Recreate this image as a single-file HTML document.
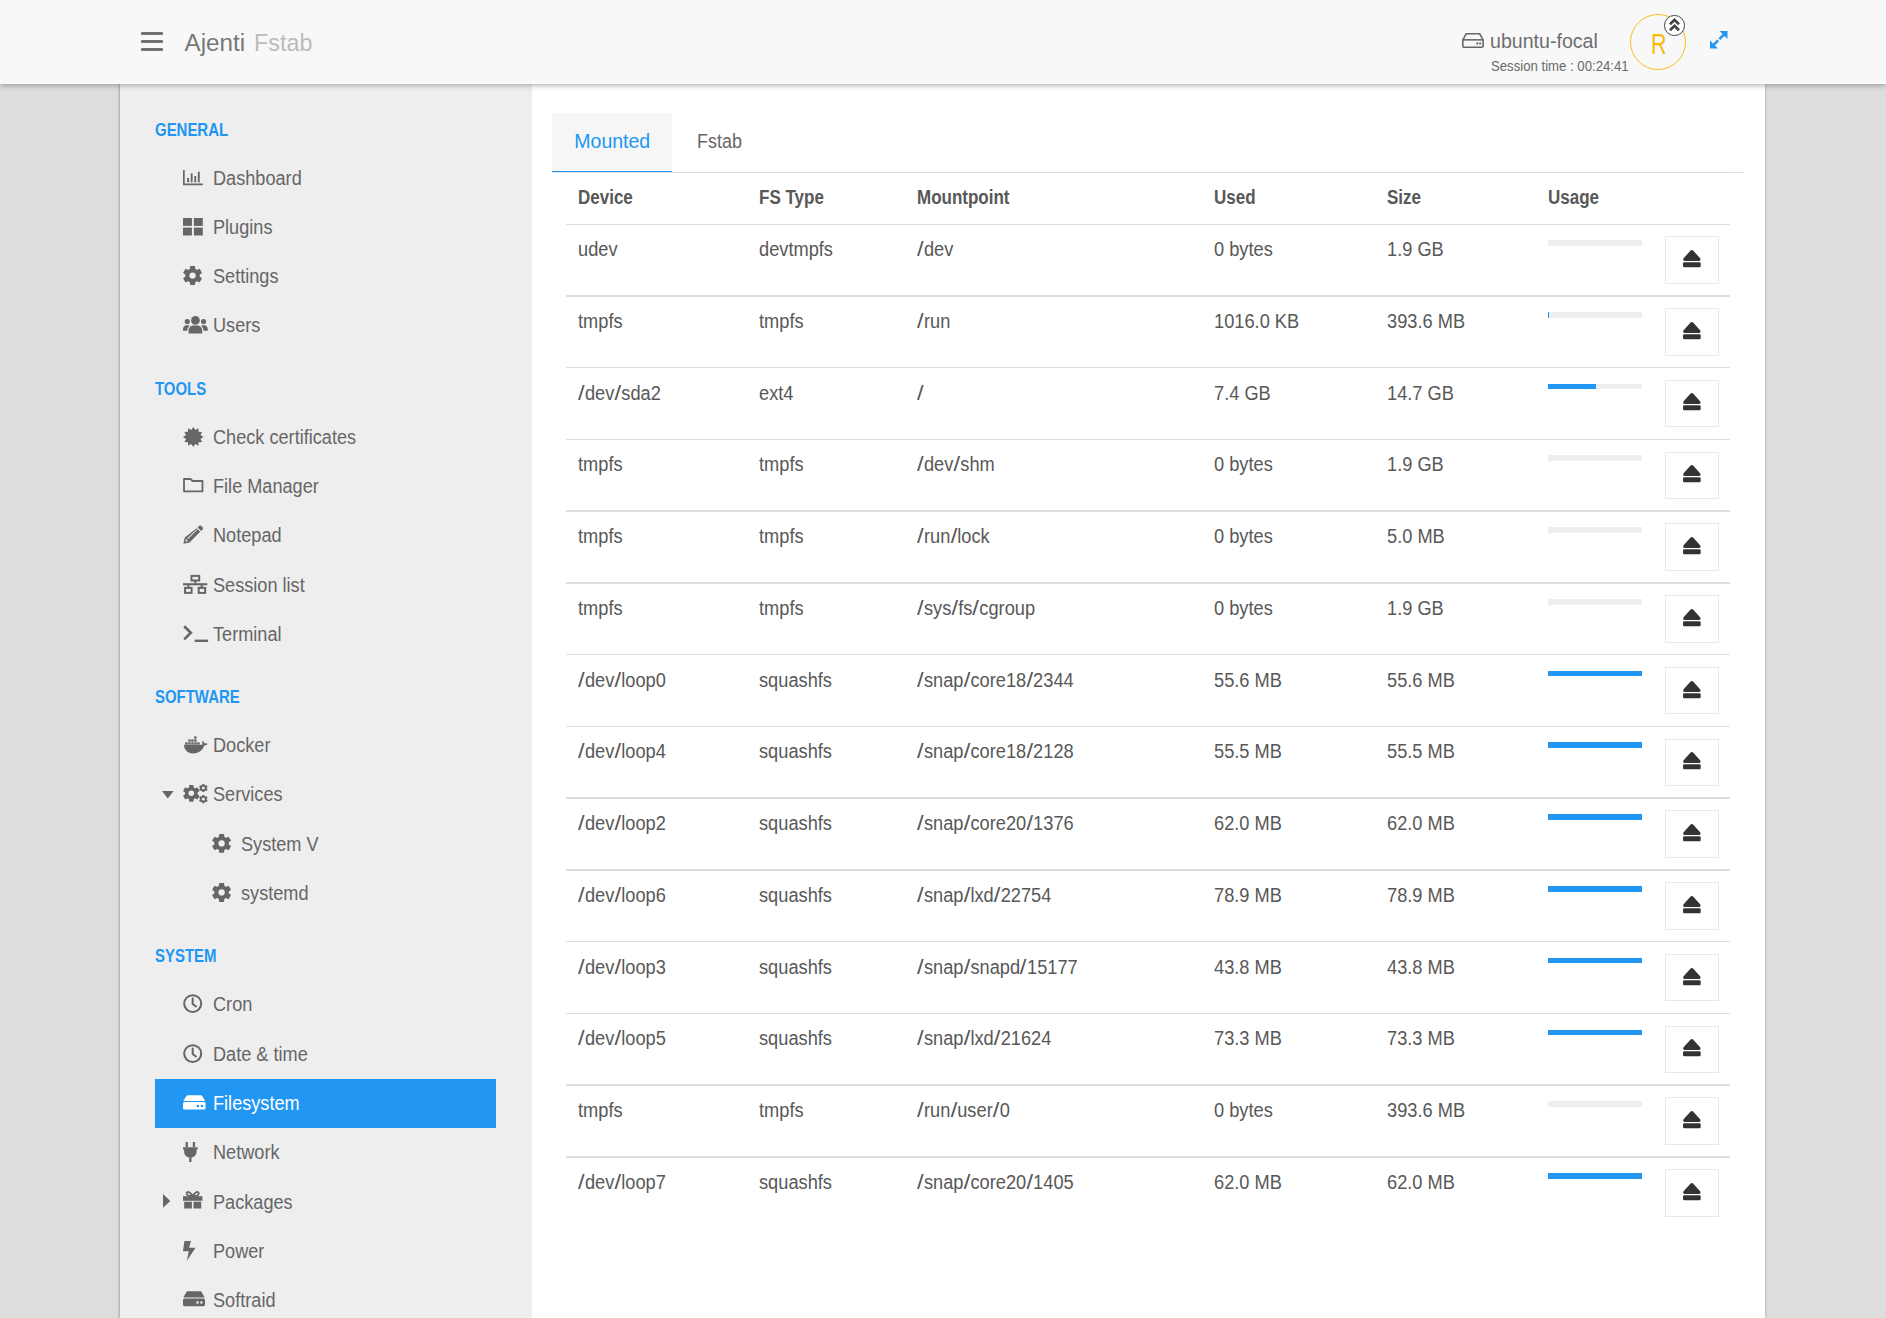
<!DOCTYPE html>
<html><head><meta charset="utf-8"><title>Ajenti Fstab</title>
<style>
html,body{margin:0;padding:0;width:1886px;height:1318px;overflow:hidden;background:#ddd}
body{position:relative;font-family:"Liberation Sans",sans-serif}
.t{position:absolute;white-space:nowrap}
.b{position:absolute}
.i{position:absolute;overflow:visible}
.sl{font-style:normal;display:inline-block;transform:scaleX(1.3);transform-origin:0 50%;margin-right:2px}
#hdr{position:absolute;left:0;top:0;width:1886px;height:84px;z-index:6}
</style></head><body>
<div class="b" style="left:0px;top:0px;width:1886px;height:1318px;background:#ddd"></div><div class="b" style="left:120px;top:84px;width:412px;height:1234px;background:#eee;box-shadow:-1px 0 2px rgba(0,0,0,.25)"></div><div class="b" style="left:532px;top:84px;width:1233px;height:1234px;background:#fff;box-shadow:1px 0 2px rgba(0,0,0,.15)"></div><div class="b" style="left:0px;top:0px;width:1886px;height:84px;background:#f8f8f8;border-bottom:1px solid rgba(255,255,255,.7);box-sizing:border-box;box-shadow:0 1px 6px rgba(0,0,0,.35);z-index:5"></div>
<div id="hdr"><div class="b" style="left:141px;top:32px;width:22px;height:3px;background:#717171;border-radius:1px"></div><div class="b" style="left:141px;top:40px;width:22px;height:3px;background:#717171;border-radius:1px"></div><div class="b" style="left:141px;top:48px;width:22px;height:3px;background:#717171;border-radius:1px"></div><div class="t" style="left:184.60px;top:30.81px;font-size:24.2px;line-height:24.2px;color:#777;font-weight:normal;">Ajenti<span style="color:#bbb;margin-left:9px;display:inline-block;transform:scaleX(.965);transform-origin:0 0">Fstab</span></div><svg class="i" style="left:1462.4px;top:33.0px;width:21.9px;height:14.7px" viewBox="0 0 22 15" preserveAspectRatio="none" fill="none"><path d="M4.2 0.8h13.6l3.4 6.2v6.2a1.3 1.3 0 0 1-1.3 1.3H2.1A1.3 1.3 0 0 1 0.8 13.2V7z" fill="none" stroke="#666" stroke-width="1.6"/><path d="M1 7h20" stroke="#666" stroke-width="1.6"/><circle cx="15.3" cy="10.6" r="1.1" fill="#666"/><circle cx="18.2" cy="10.6" r="1.1" fill="#666"/></svg><div class="t" style="left:1490.40px;top:31.55px;font-size:19.9px;line-height:19.9px;color:#6e6e6e;font-weight:normal;transform:scaleX(0.985);transform-origin:0 0;">ubuntu-focal</div><div class="t" style="left:1491.20px;top:59.07px;font-size:14.8px;line-height:14.8px;color:#6a6a6a;font-weight:normal;transform:scaleX(0.89);transform-origin:0 0;">Session time : 00:24:41</div><div class="b" style="left:1630px;top:13.9px;width:56px;height:56px;box-sizing:border-box;border:1.4px solid #fbbb1a;border-radius:50%"></div><div class="t" style="left:1651.30px;top:29.99px;font-size:28.6px;line-height:28.6px;color:#fbb80f;font-weight:normal;transform:scaleX(0.75);transform-origin:0 0;">R</div><div class="b" style="left:1664px;top:15.2px;width:18.6px;height:18.6px;border:1.3px solid #444;border-radius:50%;background:#fff"></div><svg class="i" style="left:1669.0px;top:18.0px;width:11.0px;height:14.0px" viewBox="0 0 11 14" preserveAspectRatio="none" fill="none"><path d="M1 6.2L5.5 1.8 10 6.2M1 12.2L5.5 7.8 10 12.2" fill="none" stroke="#444" stroke-width="2.7"/></svg><svg class="i" style="left:1709.7px;top:30.8px;width:17.5px;height:17.5px" viewBox="0 0 17.5 17.5" preserveAspectRatio="none" fill="#2196f3"><path d="M9.6 0H17.5V7.9z"/><path d="M7.9 17.5H0V9.6z"/><path d="M14.6 2.9L9.4 8.1M2.9 14.6L8.1 9.4" stroke="#2196f3" stroke-width="2.6"/></svg></div>
<div id="sb"><div class="t" style="left:154.80px;top:121.09px;font-size:18.2px;line-height:18.2px;color:#2196f3;font-weight:bold;transform:scaleX(0.822);transform-origin:0 0;">GENERAL</div><div class="t" style="left:213.00px;top:168.99px;font-size:19.5px;line-height:19.5px;color:#666;font-weight:normal;transform:scaleX(0.93);transform-origin:0 0;">Dashboard</div><div class="t" style="left:213.00px;top:217.99px;font-size:19.5px;line-height:19.5px;color:#666;font-weight:normal;transform:scaleX(0.93);transform-origin:0 0;">Plugins</div><div class="t" style="left:213.00px;top:266.99px;font-size:19.5px;line-height:19.5px;color:#666;font-weight:normal;transform:scaleX(0.93);transform-origin:0 0;">Settings</div><div class="t" style="left:213.00px;top:315.99px;font-size:19.5px;line-height:19.5px;color:#666;font-weight:normal;transform:scaleX(0.93);transform-origin:0 0;">Users</div><div class="t" style="left:154.80px;top:380.09px;font-size:18.2px;line-height:18.2px;color:#2196f3;font-weight:bold;transform:scaleX(0.822);transform-origin:0 0;">TOOLS</div><div class="t" style="left:213.00px;top:427.99px;font-size:19.5px;line-height:19.5px;color:#666;font-weight:normal;transform:scaleX(0.93);transform-origin:0 0;">Check certificates</div><div class="t" style="left:213.00px;top:476.99px;font-size:19.5px;line-height:19.5px;color:#666;font-weight:normal;transform:scaleX(0.93);transform-origin:0 0;">File Manager</div><div class="t" style="left:213.00px;top:525.99px;font-size:19.5px;line-height:19.5px;color:#666;font-weight:normal;transform:scaleX(0.93);transform-origin:0 0;">Notepad</div><div class="t" style="left:213.00px;top:575.99px;font-size:19.5px;line-height:19.5px;color:#666;font-weight:normal;transform:scaleX(0.93);transform-origin:0 0;">Session list</div><div class="t" style="left:213.00px;top:624.99px;font-size:19.5px;line-height:19.5px;color:#666;font-weight:normal;transform:scaleX(0.93);transform-origin:0 0;">Terminal</div><div class="t" style="left:154.80px;top:688.09px;font-size:18.2px;line-height:18.2px;color:#2196f3;font-weight:bold;transform:scaleX(0.822);transform-origin:0 0;">SOFTWARE</div><div class="t" style="left:213.00px;top:735.99px;font-size:19.5px;line-height:19.5px;color:#666;font-weight:normal;transform:scaleX(0.93);transform-origin:0 0;">Docker</div><div class="t" style="left:213.00px;top:784.99px;font-size:19.5px;line-height:19.5px;color:#666;font-weight:normal;transform:scaleX(0.93);transform-origin:0 0;">Services</div><div class="t" style="left:241.00px;top:834.99px;font-size:19.5px;line-height:19.5px;color:#666;font-weight:normal;transform:scaleX(0.93);transform-origin:0 0;">System V</div><div class="t" style="left:241.00px;top:883.99px;font-size:19.5px;line-height:19.5px;color:#666;font-weight:normal;transform:scaleX(0.93);transform-origin:0 0;">systemd</div><div class="t" style="left:154.80px;top:947.09px;font-size:18.2px;line-height:18.2px;color:#2196f3;font-weight:bold;transform:scaleX(0.822);transform-origin:0 0;">SYSTEM</div><div class="b" style="left:155px;top:1079px;width:341px;height:49px;background:#2196f3"></div><div class="t" style="left:213.00px;top:994.99px;font-size:19.5px;line-height:19.5px;color:#666;font-weight:normal;transform:scaleX(0.93);transform-origin:0 0;">Cron</div><div class="t" style="left:213.00px;top:1044.99px;font-size:19.5px;line-height:19.5px;color:#666;font-weight:normal;transform:scaleX(0.93);transform-origin:0 0;">Date &amp; time</div><div class="t" style="left:213.00px;top:1093.99px;font-size:19.5px;line-height:19.5px;color:#fff;font-weight:normal;transform:scaleX(0.93);transform-origin:0 0;">Filesystem</div><div class="t" style="left:213.00px;top:1142.99px;font-size:19.5px;line-height:19.5px;color:#666;font-weight:normal;transform:scaleX(0.93);transform-origin:0 0;">Network</div><div class="t" style="left:213.00px;top:1192.99px;font-size:19.5px;line-height:19.5px;color:#666;font-weight:normal;transform:scaleX(0.93);transform-origin:0 0;">Packages</div><div class="t" style="left:213.00px;top:1241.99px;font-size:19.5px;line-height:19.5px;color:#666;font-weight:normal;transform:scaleX(0.93);transform-origin:0 0;">Power</div><div class="t" style="left:213.00px;top:1290.99px;font-size:19.5px;line-height:19.5px;color:#666;font-weight:normal;transform:scaleX(0.93);transform-origin:0 0;">Softraid</div><svg class="i" style="left:182.9px;top:170.2px;width:19.8px;height:15.3px" viewBox="0 0 20 15.3" preserveAspectRatio="none" fill="#666"><path d="M0 0h1.7v13.6H20v1.7H0z"/><rect x="4.2" y="8" width="1.9" height="4.3"/><rect x="7.8" y="3.3" width="1.9" height="9"/><rect x="11.4" y="6" width="1.9" height="6.3"/><rect x="15" y="1.8" width="1.9" height="10.5"/></svg><svg class="i" style="left:182.9px;top:217.9px;width:19.8px;height:17.5px" viewBox="0 0 20 17.5" preserveAspectRatio="none" fill="#666"><rect x="0" y="0" width="9" height="7.9"/><rect x="11" y="0" width="9" height="7.9"/><rect x="0" y="9.6" width="9" height="7.9"/><rect x="11" y="9.6" width="9" height="7.9"/></svg><svg class="i" style="left:183.4px;top:265.9px;width:19.1px;height:19.1px" viewBox="0 0 20 20" preserveAspectRatio="none" fill="#666"><rect x="7.3" y="0" width="5.4" height="5" rx="0.8" transform="rotate(0 10 10)"/><rect x="7.3" y="0" width="5.4" height="5" rx="0.8" transform="rotate(60 10 10)"/><rect x="7.3" y="0" width="5.4" height="5" rx="0.8" transform="rotate(120 10 10)"/><rect x="7.3" y="0" width="5.4" height="5" rx="0.8" transform="rotate(180 10 10)"/><rect x="7.3" y="0" width="5.4" height="5" rx="0.8" transform="rotate(240 10 10)"/><rect x="7.3" y="0" width="5.4" height="5" rx="0.8" transform="rotate(300 10 10)"/><circle cx="10" cy="10" r="7.6"/><circle cx="10" cy="10" r="3.3" fill="#eee"/></svg><svg class="i" style="left:182.9px;top:315.9px;width:24.8px;height:17.5px" viewBox="0 0 25 17.5" preserveAspectRatio="none" fill="#666"><circle cx="12.5" cy="4.4" r="4.4"/><path d="M5.6 17.5v-2.6c0-3.2 2.4-5.3 4.6-5.3h4.6c2.2 0 4.6 2.1 4.6 5.3v2.6z"/><circle cx="4.3" cy="5.6" r="2.6"/><circle cx="20.7" cy="5.6" r="2.6"/><path d="M0 13.2c0-2.3 1.4-4 3.5-4h1.8c.6 0 1.2.2 1.6.5-1.6 1.2-2.6 3-2.7 5.1H0z"/><path d="M25 13.2c0-2.3-1.4-4-3.5-4h-1.8c-.6 0-1.2.2-1.6.5 1.6 1.2 2.6 3 2.7 5.1H25z"/></svg><svg class="i" style="left:182.8px;top:426.5px;width:20.5px;height:20.0px" viewBox="0 0 20 20" preserveAspectRatio="none" fill="#666"><polygon points="10.00,0.00 11.89,2.95 15.00,1.34 15.16,4.84 18.66,5.00 17.05,8.11 20.00,10.00 17.05,11.89 18.66,15.00 15.16,15.16 15.00,18.66 11.89,17.05 10.00,20.00 8.11,17.05 5.00,18.66 4.84,15.16 1.34,15.00 2.95,11.89 0.00,10.00 2.95,8.11 1.34,5.00 4.84,4.84 5.00,1.34 8.11,2.95"/></svg><svg class="i" style="left:182.8px;top:478.4px;width:20.5px;height:14.3px" viewBox="0 0 20.5 14.3" preserveAspectRatio="none" fill="none"><path d="M1 1h6.5l2 2H19.5v10.3H1z" fill="none" stroke="#666" stroke-width="1.8" stroke-linejoin="round"/></svg><svg class="i" style="left:182.8px;top:525.0px;width:20.5px;height:19.0px" viewBox="0 0 20.5 19" preserveAspectRatio="none" fill="#666"><path d="M16.1 0.9c.6-.6 1.5-.6 2.1 0l1.4 1.4c.6.6.6 1.5 0 2.1l-1.5 1.5-3.5-3.5z"/><path d="M13.7 3.3l3.5 3.5L6.6 17.4 0.4 18.8 1.8 12.6z M4.2 13.2l9.7-8.9.5.5-9.5 9.2z M2.4 16.8l.6-2.7 2 2z" fill-rule="evenodd"/></svg><svg class="i" style="left:183.3px;top:575.2px;width:24.3px;height:18.8px" viewBox="0 0 24.3 18.8" preserveAspectRatio="none" fill="#666"><rect x="8.45" y="0.9" width="7.75" height="4.6" fill="none" stroke="#666" stroke-width="2"/><rect x="11.3" y="5.5" width="2" height="3"/><rect x="0" y="8.2" width="24.3" height="2.1"/><rect x="4.4" y="10" width="2" height="2.2"/><rect x="17.7" y="10" width="2" height="2.2"/><rect x="2.1" y="12.9" width="6.5" height="5" fill="none" stroke="#666" stroke-width="2"/><rect x="15.7" y="12.9" width="6.5" height="5" fill="none" stroke="#666" stroke-width="2"/></svg><svg class="i" style="left:182.8px;top:625.3px;width:25.1px;height:17.0px" viewBox="0 0 25 17" preserveAspectRatio="none" fill="#666"><path d="M1.2 1.2L7.8 7.7 1.2 14.3" fill="none" stroke="#666" stroke-width="2.6" stroke-linejoin="miter"/><rect x="11.6" y="14.6" width="13.4" height="2.4"/></svg><svg class="i" style="left:182.9px;top:735.5px;width:25.0px;height:17.5px" viewBox="0 0 25 17.5" preserveAspectRatio="none" fill="#666"><path d="M1 8.8H19.3V4.4C20.3 5.2 21.1 6.6 21.9 7.2L24.9 7.7C24 8.6 22.6 9.3 21.3 9.5C19.6 14.6 15.2 17.5 9.9 17.5C4.6 17.5 1 13.6 1 8.8z"/><rect x="11.1" y="0.4" width="2.5" height="2.3"/><rect x="5.2" y="3.4" width="2.5" height="2.3"/><rect x="8.2" y="3.4" width="2.5" height="2.3"/><rect x="11.2" y="3.4" width="2.5" height="2.3"/><rect x="2.2" y="6.3" width="2.5" height="2.3"/><rect x="5.2" y="6.3" width="2.5" height="2.3"/><rect x="8.2" y="6.3" width="2.5" height="2.3"/><rect x="11.2" y="6.3" width="2.5" height="2.3"/><rect x="14.2" y="6.3" width="2.5" height="2.3"/></svg><svg class="i" style="left:161.6px;top:790.5px;width:11.6px;height:7.5px" viewBox="0 0 11.6 7.5" preserveAspectRatio="none" fill="#666"><path d="M0 0h11.6L5.8 7.5z"/></svg><svg class="i" style="left:183.0px;top:785.0px;width:16.6px;height:16.7px" viewBox="0 0 20 20" preserveAspectRatio="none" fill="#666"><rect x="7.3" y="0" width="5.4" height="5" rx="0.8" transform="rotate(0 10 10)"/><rect x="7.3" y="0" width="5.4" height="5" rx="0.8" transform="rotate(60 10 10)"/><rect x="7.3" y="0" width="5.4" height="5" rx="0.8" transform="rotate(120 10 10)"/><rect x="7.3" y="0" width="5.4" height="5" rx="0.8" transform="rotate(180 10 10)"/><rect x="7.3" y="0" width="5.4" height="5" rx="0.8" transform="rotate(240 10 10)"/><rect x="7.3" y="0" width="5.4" height="5" rx="0.8" transform="rotate(300 10 10)"/><circle cx="10" cy="10" r="7.6"/><circle cx="10" cy="10" r="3.3" fill="#eee"/></svg><svg class="i" style="left:199.3px;top:783.8px;width:8.7px;height:8.1px" viewBox="0 0 20 20" preserveAspectRatio="none" fill="#666"><rect x="7.3" y="0" width="5.4" height="5" rx="0.8" transform="rotate(0 10 10)"/><rect x="7.3" y="0" width="5.4" height="5" rx="0.8" transform="rotate(60 10 10)"/><rect x="7.3" y="0" width="5.4" height="5" rx="0.8" transform="rotate(120 10 10)"/><rect x="7.3" y="0" width="5.4" height="5" rx="0.8" transform="rotate(180 10 10)"/><rect x="7.3" y="0" width="5.4" height="5" rx="0.8" transform="rotate(240 10 10)"/><rect x="7.3" y="0" width="5.4" height="5" rx="0.8" transform="rotate(300 10 10)"/><circle cx="10" cy="10" r="7.6"/><circle cx="10" cy="10" r="3.3" fill="#eee"/></svg><svg class="i" style="left:199.3px;top:794.9px;width:8.7px;height:8.3px" viewBox="0 0 20 20" preserveAspectRatio="none" fill="#666"><rect x="7.3" y="0" width="5.4" height="5" rx="0.8" transform="rotate(0 10 10)"/><rect x="7.3" y="0" width="5.4" height="5" rx="0.8" transform="rotate(60 10 10)"/><rect x="7.3" y="0" width="5.4" height="5" rx="0.8" transform="rotate(120 10 10)"/><rect x="7.3" y="0" width="5.4" height="5" rx="0.8" transform="rotate(180 10 10)"/><rect x="7.3" y="0" width="5.4" height="5" rx="0.8" transform="rotate(240 10 10)"/><rect x="7.3" y="0" width="5.4" height="5" rx="0.8" transform="rotate(300 10 10)"/><circle cx="10" cy="10" r="7.6"/><circle cx="10" cy="10" r="3.3" fill="#eee"/></svg><svg class="i" style="left:211.5px;top:834.2px;width:19.2px;height:18.8px" viewBox="0 0 20 20" preserveAspectRatio="none" fill="#666"><rect x="7.3" y="0" width="5.4" height="5" rx="0.8" transform="rotate(0 10 10)"/><rect x="7.3" y="0" width="5.4" height="5" rx="0.8" transform="rotate(60 10 10)"/><rect x="7.3" y="0" width="5.4" height="5" rx="0.8" transform="rotate(120 10 10)"/><rect x="7.3" y="0" width="5.4" height="5" rx="0.8" transform="rotate(180 10 10)"/><rect x="7.3" y="0" width="5.4" height="5" rx="0.8" transform="rotate(240 10 10)"/><rect x="7.3" y="0" width="5.4" height="5" rx="0.8" transform="rotate(300 10 10)"/><circle cx="10" cy="10" r="7.6"/><circle cx="10" cy="10" r="3.3" fill="#eee"/></svg><svg class="i" style="left:211.5px;top:883.2px;width:19.2px;height:18.9px" viewBox="0 0 20 20" preserveAspectRatio="none" fill="#666"><rect x="7.3" y="0" width="5.4" height="5" rx="0.8" transform="rotate(0 10 10)"/><rect x="7.3" y="0" width="5.4" height="5" rx="0.8" transform="rotate(60 10 10)"/><rect x="7.3" y="0" width="5.4" height="5" rx="0.8" transform="rotate(120 10 10)"/><rect x="7.3" y="0" width="5.4" height="5" rx="0.8" transform="rotate(180 10 10)"/><rect x="7.3" y="0" width="5.4" height="5" rx="0.8" transform="rotate(240 10 10)"/><rect x="7.3" y="0" width="5.4" height="5" rx="0.8" transform="rotate(300 10 10)"/><circle cx="10" cy="10" r="7.6"/><circle cx="10" cy="10" r="3.3" fill="#eee"/></svg><svg class="i" style="left:183.3px;top:994.2px;width:19.4px;height:19.2px" viewBox="0 0 20 20" preserveAspectRatio="none" fill="none"><circle cx="10" cy="10" r="8.8" fill="none" stroke="#666" stroke-width="2.1"/><path d="M10 4.6v5.8l3.4 2.6" fill="none" stroke="#666" stroke-width="2.1" stroke-linecap="round"/></svg><svg class="i" style="left:183.3px;top:1044.2px;width:19.4px;height:19.2px" viewBox="0 0 20 20" preserveAspectRatio="none" fill="none"><circle cx="10" cy="10" r="8.8" fill="none" stroke="#666" stroke-width="2.1"/><path d="M10 4.6v5.8l3.4 2.6" fill="none" stroke="#666" stroke-width="2.1" stroke-linecap="round"/></svg><svg class="i" style="left:183.2px;top:1095.1px;width:22.6px;height:14.6px" viewBox="0 0 22.6 14.6" preserveAspectRatio="none" fill="#fff"><path d="M4.6 0.3h13.4c.5 0 .9.2 1.1.6l3.2 5.2H0.3l3.2-5.2c.2-.4.6-.6 1.1-.6z"/><rect x="0" y="7.1" width="22.6" height="7.5" rx="1.6"/><circle cx="14.9" cy="11" r="1.25" fill="#2196f3"/><circle cx="18.9" cy="11" r="1.25" fill="#2196f3"/></svg><svg class="i" style="left:183.3px;top:1142.0px;width:14.7px;height:20.0px" viewBox="0 0 14.7 20" preserveAspectRatio="none" fill="#666"><rect x="2.6" y="0" width="2.3" height="5"/><rect x="9.8" y="0" width="2.3" height="5"/><path d="M0 5.3h14.7v2.3h-1.1v1.9c0 3.2-2.3 5.7-5.1 6.1V20H6.2v-4.4C3.4 15.2 1.1 12.7 1.1 9.5V7.6H0z"/></svg><svg class="i" style="left:163.0px;top:1194.3px;width:7.3px;height:13.8px" viewBox="0 0 7.3 13.8" preserveAspectRatio="none" fill="#666"><path d="M0 0L7.3 6.9 0 13.8z"/></svg><svg class="i" style="left:183.3px;top:1191.4px;width:19.4px;height:17.6px" viewBox="0 0 19.4 17.6" preserveAspectRatio="none" fill="#666"><path d="M0 5.2h19.4v4.6H0z"/><path d="M1.2 10.8h7.7v6.8H1.2z M10.5 10.8h7.7v6.8h-7.7z"/><path d="M9.7 5C8 2 5.6.3 4.2 1.2 3 2 3.6 4.3 6.3 5z M9.7 5c1.7-3 4.1-4.7 5.5-3.8 1.2.8.6 3.1-2.1 3.8z" fill="none" stroke="#666" stroke-width="1.8"/></svg><svg class="i" style="left:183.3px;top:1240.5px;width:12.6px;height:19.7px" viewBox="0 0 12.6 19.7" preserveAspectRatio="none" fill="#666"><path d="M1.4 0h6.6L6.1 6.7h6.5L3.8 19.7l2-9.4H0z"/></svg><svg class="i" style="left:183.3px;top:1291.4px;width:22.0px;height:15.3px" viewBox="0 0 22.6 14.6" preserveAspectRatio="none" fill="#666"><path d="M4.6 0.3h13.4c.5 0 .9.2 1.1.6l3.2 5.2H0.3l3.2-5.2c.2-.4.6-.6 1.1-.6z"/><rect x="0" y="7.1" width="22.6" height="7.5" rx="1.6"/><circle cx="14.9" cy="11" r="1.25" fill="#eee"/><circle cx="18.9" cy="11" r="1.25" fill="#eee"/></svg></div>
<div id="mn"><div class="b" style="left:552px;top:113px;width:120px;height:59px;background:#f6f6f6"></div><div class="b" style="left:552px;top:171.6px;width:1192px;height:1.200000000000017px;background:#e2e2e2"></div><div class="b" style="left:566px;top:172px;width:1164px;height:1px;background:#ddd"></div><div class="b" style="left:552px;top:170.6px;width:120px;height:1.4000000000000057px;background:#2196f3"></div><div class="t" style="left:574.30px;top:131.99px;font-size:19.5px;line-height:19.5px;color:#2196f3;font-weight:normal;transform:scaleX(1.0);transform-origin:0 0;">Mounted</div><div class="t" style="left:697.20px;top:131.99px;font-size:19.5px;line-height:19.5px;color:#666;font-weight:normal;transform:scaleX(0.92);transform-origin:0 0;">Fstab</div><div class="t" style="left:578.00px;top:187.99px;font-size:19.5px;line-height:19.5px;color:#585858;font-weight:bold;transform:scaleX(0.872);transform-origin:0 0;">Device</div><div class="t" style="left:759.00px;top:187.99px;font-size:19.5px;line-height:19.5px;color:#585858;font-weight:bold;transform:scaleX(0.872);transform-origin:0 0;">FS Type</div><div class="t" style="left:917.00px;top:187.99px;font-size:19.5px;line-height:19.5px;color:#585858;font-weight:bold;transform:scaleX(0.872);transform-origin:0 0;">Mountpoint</div><div class="t" style="left:1214.00px;top:187.99px;font-size:19.5px;line-height:19.5px;color:#585858;font-weight:bold;transform:scaleX(0.872);transform-origin:0 0;">Used</div><div class="t" style="left:1387.00px;top:187.99px;font-size:19.5px;line-height:19.5px;color:#585858;font-weight:bold;transform:scaleX(0.872);transform-origin:0 0;">Size</div><div class="t" style="left:1548.00px;top:187.99px;font-size:19.5px;line-height:19.5px;color:#585858;font-weight:bold;transform:scaleX(0.872);transform-origin:0 0;">Usage</div><div class="b" style="left:566px;top:223.5px;width:1164px;height:1.5px;background:#ddd"></div><div class="t" style="left:578.00px;top:239.99px;font-size:19.5px;line-height:19.5px;color:#585858;font-weight:normal;transform:scaleX(0.935);transform-origin:0 0;">udev</div><div class="t" style="left:759.00px;top:239.99px;font-size:19.5px;line-height:19.5px;color:#585858;font-weight:normal;transform:scaleX(0.935);transform-origin:0 0;">devtmpfs</div><div class="t" style="left:917.00px;top:239.99px;font-size:19.5px;line-height:19.5px;color:#585858;font-weight:normal;transform:scaleX(0.935);transform-origin:0 0;"><i class="sl">/</i>dev</div><div class="t" style="left:1214.00px;top:239.99px;font-size:19.5px;line-height:19.5px;color:#585858;font-weight:normal;transform:scaleX(0.935);transform-origin:0 0;">0 bytes</div><div class="t" style="left:1387.00px;top:239.99px;font-size:19.5px;line-height:19.5px;color:#585858;font-weight:normal;transform:scaleX(0.935);transform-origin:0 0;">1.9 GB</div><div class="b" style="left:1548px;top:240.0px;width:94px;height:5.800000000000011px;background:#eee"></div><div class="b" style="left:1665.4px;top:236.2px;width:53.59999999999991px;height:47.5px;background:#fff;border:1px solid #e9e9e9;box-sizing:border-box"></div><svg class="i" style="left:1683.0px;top:249.9px;width:17.7px;height:17.2px" viewBox="0 0 17.7 17.2" preserveAspectRatio="none" fill="#333"><path d="M7.6 0.6c.7-.7 1.8-.7 2.5 0l7 7.6c.9 1 .4 2.7-1 2.7H1.6C.2 10.9-.3 9.2.6 8.2z"/><rect x="0" y="12.3" width="17.7" height="4.9" rx="1.3"/></svg><div class="b" style="left:566px;top:295.0px;width:1164px;height:1.5px;background:#ddd"></div><div class="t" style="left:578.00px;top:311.99px;font-size:19.5px;line-height:19.5px;color:#585858;font-weight:normal;transform:scaleX(0.935);transform-origin:0 0;">tmpfs</div><div class="t" style="left:759.00px;top:311.99px;font-size:19.5px;line-height:19.5px;color:#585858;font-weight:normal;transform:scaleX(0.935);transform-origin:0 0;">tmpfs</div><div class="t" style="left:917.00px;top:311.99px;font-size:19.5px;line-height:19.5px;color:#585858;font-weight:normal;transform:scaleX(0.935);transform-origin:0 0;"><i class="sl">/</i>run</div><div class="t" style="left:1214.00px;top:311.99px;font-size:19.5px;line-height:19.5px;color:#585858;font-weight:normal;transform:scaleX(0.935);transform-origin:0 0;">1016.0 KB</div><div class="t" style="left:1387.00px;top:311.99px;font-size:19.5px;line-height:19.5px;color:#585858;font-weight:normal;transform:scaleX(0.935);transform-origin:0 0;">393.6 MB</div><div class="b" style="left:1548px;top:311.8px;width:94px;height:5.800000000000011px;background:#eee"></div><div class="b" style="left:1548px;top:311.8px;width:1.2000000000000455px;height:5.800000000000011px;background:#2196f3"></div><div class="b" style="left:1665.4px;top:308.0px;width:53.59999999999991px;height:47.5px;background:#fff;border:1px solid #e9e9e9;box-sizing:border-box"></div><svg class="i" style="left:1683.0px;top:321.7px;width:17.7px;height:17.2px" viewBox="0 0 17.7 17.2" preserveAspectRatio="none" fill="#333"><path d="M7.6 0.6c.7-.7 1.8-.7 2.5 0l7 7.6c.9 1 .4 2.7-1 2.7H1.6C.2 10.9-.3 9.2.6 8.2z"/><rect x="0" y="12.3" width="17.7" height="4.9" rx="1.3"/></svg><div class="b" style="left:566px;top:366.7px;width:1164px;height:1.5px;background:#ddd"></div><div class="t" style="left:578.00px;top:383.99px;font-size:19.5px;line-height:19.5px;color:#585858;font-weight:normal;transform:scaleX(0.935);transform-origin:0 0;"><i class="sl">/</i>dev<i class="sl">/</i>sda2</div><div class="t" style="left:759.00px;top:383.99px;font-size:19.5px;line-height:19.5px;color:#585858;font-weight:normal;transform:scaleX(0.935);transform-origin:0 0;">ext4</div><div class="t" style="left:917.00px;top:383.99px;font-size:19.5px;line-height:19.5px;color:#585858;font-weight:normal;transform:scaleX(0.935);transform-origin:0 0;"><i class="sl">/</i></div><div class="t" style="left:1214.00px;top:383.99px;font-size:19.5px;line-height:19.5px;color:#585858;font-weight:normal;transform:scaleX(0.935);transform-origin:0 0;">7.4 GB</div><div class="t" style="left:1387.00px;top:383.99px;font-size:19.5px;line-height:19.5px;color:#585858;font-weight:normal;transform:scaleX(0.935);transform-origin:0 0;">14.7 GB</div><div class="b" style="left:1548px;top:383.5px;width:94px;height:5.800000000000011px;background:#eee"></div><div class="b" style="left:1548px;top:383.5px;width:47.700000000000045px;height:5.800000000000011px;background:#2196f3"></div><div class="b" style="left:1665.4px;top:379.7px;width:53.59999999999991px;height:47.5px;background:#fff;border:1px solid #e9e9e9;box-sizing:border-box"></div><svg class="i" style="left:1683.0px;top:393.4px;width:17.7px;height:17.2px" viewBox="0 0 17.7 17.2" preserveAspectRatio="none" fill="#333"><path d="M7.6 0.6c.7-.7 1.8-.7 2.5 0l7 7.6c.9 1 .4 2.7-1 2.7H1.6C.2 10.9-.3 9.2.6 8.2z"/><rect x="0" y="12.3" width="17.7" height="4.9" rx="1.3"/></svg><div class="b" style="left:566px;top:438.5px;width:1164px;height:1.5px;background:#ddd"></div><div class="t" style="left:578.00px;top:454.99px;font-size:19.5px;line-height:19.5px;color:#585858;font-weight:normal;transform:scaleX(0.935);transform-origin:0 0;">tmpfs</div><div class="t" style="left:759.00px;top:454.99px;font-size:19.5px;line-height:19.5px;color:#585858;font-weight:normal;transform:scaleX(0.935);transform-origin:0 0;">tmpfs</div><div class="t" style="left:917.00px;top:454.99px;font-size:19.5px;line-height:19.5px;color:#585858;font-weight:normal;transform:scaleX(0.935);transform-origin:0 0;"><i class="sl">/</i>dev<i class="sl">/</i>shm</div><div class="t" style="left:1214.00px;top:454.99px;font-size:19.5px;line-height:19.5px;color:#585858;font-weight:normal;transform:scaleX(0.935);transform-origin:0 0;">0 bytes</div><div class="t" style="left:1387.00px;top:454.99px;font-size:19.5px;line-height:19.5px;color:#585858;font-weight:normal;transform:scaleX(0.935);transform-origin:0 0;">1.9 GB</div><div class="b" style="left:1548px;top:455.3px;width:94px;height:5.800000000000011px;background:#eee"></div><div class="b" style="left:1665.4px;top:451.5px;width:53.59999999999991px;height:47.5px;background:#fff;border:1px solid #e9e9e9;box-sizing:border-box"></div><svg class="i" style="left:1683.0px;top:465.2px;width:17.7px;height:17.2px" viewBox="0 0 17.7 17.2" preserveAspectRatio="none" fill="#333"><path d="M7.6 0.6c.7-.7 1.8-.7 2.5 0l7 7.6c.9 1 .4 2.7-1 2.7H1.6C.2 10.9-.3 9.2.6 8.2z"/><rect x="0" y="12.3" width="17.7" height="4.9" rx="1.3"/></svg><div class="b" style="left:566px;top:510.3px;width:1164px;height:1.5px;background:#ddd"></div><div class="t" style="left:578.00px;top:526.99px;font-size:19.5px;line-height:19.5px;color:#585858;font-weight:normal;transform:scaleX(0.935);transform-origin:0 0;">tmpfs</div><div class="t" style="left:759.00px;top:526.99px;font-size:19.5px;line-height:19.5px;color:#585858;font-weight:normal;transform:scaleX(0.935);transform-origin:0 0;">tmpfs</div><div class="t" style="left:917.00px;top:526.99px;font-size:19.5px;line-height:19.5px;color:#585858;font-weight:normal;transform:scaleX(0.935);transform-origin:0 0;"><i class="sl">/</i>run<i class="sl">/</i>lock</div><div class="t" style="left:1214.00px;top:526.99px;font-size:19.5px;line-height:19.5px;color:#585858;font-weight:normal;transform:scaleX(0.935);transform-origin:0 0;">0 bytes</div><div class="t" style="left:1387.00px;top:526.99px;font-size:19.5px;line-height:19.5px;color:#585858;font-weight:normal;transform:scaleX(0.935);transform-origin:0 0;">5.0 MB</div><div class="b" style="left:1548px;top:527.1px;width:94px;height:5.7999999999999545px;background:#eee"></div><div class="b" style="left:1665.4px;top:523.3px;width:53.59999999999991px;height:47.5px;background:#fff;border:1px solid #e9e9e9;box-sizing:border-box"></div><svg class="i" style="left:1683.0px;top:537.0px;width:17.7px;height:17.2px" viewBox="0 0 17.7 17.2" preserveAspectRatio="none" fill="#333"><path d="M7.6 0.6c.7-.7 1.8-.7 2.5 0l7 7.6c.9 1 .4 2.7-1 2.7H1.6C.2 10.9-.3 9.2.6 8.2z"/><rect x="0" y="12.3" width="17.7" height="4.9" rx="1.3"/></svg><div class="b" style="left:566px;top:582.0px;width:1164px;height:1.5px;background:#ddd"></div><div class="t" style="left:578.00px;top:598.99px;font-size:19.5px;line-height:19.5px;color:#585858;font-weight:normal;transform:scaleX(0.935);transform-origin:0 0;">tmpfs</div><div class="t" style="left:759.00px;top:598.99px;font-size:19.5px;line-height:19.5px;color:#585858;font-weight:normal;transform:scaleX(0.935);transform-origin:0 0;">tmpfs</div><div class="t" style="left:917.00px;top:598.99px;font-size:19.5px;line-height:19.5px;color:#585858;font-weight:normal;transform:scaleX(0.935);transform-origin:0 0;"><i class="sl">/</i>sys<i class="sl">/</i>fs<i class="sl">/</i>cgroup</div><div class="t" style="left:1214.00px;top:598.99px;font-size:19.5px;line-height:19.5px;color:#585858;font-weight:normal;transform:scaleX(0.935);transform-origin:0 0;">0 bytes</div><div class="t" style="left:1387.00px;top:598.99px;font-size:19.5px;line-height:19.5px;color:#585858;font-weight:normal;transform:scaleX(0.935);transform-origin:0 0;">1.9 GB</div><div class="b" style="left:1548px;top:598.9px;width:94px;height:5.7000000000000455px;background:#eee"></div><div class="b" style="left:1665.4px;top:595.0px;width:53.59999999999991px;height:47.5px;background:#fff;border:1px solid #e9e9e9;box-sizing:border-box"></div><svg class="i" style="left:1683.0px;top:608.8px;width:17.7px;height:17.2px" viewBox="0 0 17.7 17.2" preserveAspectRatio="none" fill="#333"><path d="M7.6 0.6c.7-.7 1.8-.7 2.5 0l7 7.6c.9 1 .4 2.7-1 2.7H1.6C.2 10.9-.3 9.2.6 8.2z"/><rect x="0" y="12.3" width="17.7" height="4.9" rx="1.3"/></svg><div class="b" style="left:566px;top:653.8px;width:1164px;height:1.5px;background:#ddd"></div><div class="t" style="left:578.00px;top:670.99px;font-size:19.5px;line-height:19.5px;color:#585858;font-weight:normal;transform:scaleX(0.935);transform-origin:0 0;"><i class="sl">/</i>dev<i class="sl">/</i>loop0</div><div class="t" style="left:759.00px;top:670.99px;font-size:19.5px;line-height:19.5px;color:#585858;font-weight:normal;transform:scaleX(0.935);transform-origin:0 0;">squashfs</div><div class="t" style="left:917.00px;top:670.99px;font-size:19.5px;line-height:19.5px;color:#585858;font-weight:normal;transform:scaleX(0.935);transform-origin:0 0;"><i class="sl">/</i>snap<i class="sl">/</i>core18<i class="sl">/</i>2344</div><div class="t" style="left:1214.00px;top:670.99px;font-size:19.5px;line-height:19.5px;color:#585858;font-weight:normal;transform:scaleX(0.935);transform-origin:0 0;">55.6 MB</div><div class="t" style="left:1387.00px;top:670.99px;font-size:19.5px;line-height:19.5px;color:#585858;font-weight:normal;transform:scaleX(0.935);transform-origin:0 0;">55.6 MB</div><div class="b" style="left:1548px;top:670.6px;width:94px;height:5.7999999999999545px;background:#eee"></div><div class="b" style="left:1548px;top:670.6px;width:94px;height:5.7999999999999545px;background:#2196f3"></div><div class="b" style="left:1665.4px;top:666.8px;width:53.59999999999991px;height:47.5px;background:#fff;border:1px solid #e9e9e9;box-sizing:border-box"></div><svg class="i" style="left:1683.0px;top:680.5px;width:17.7px;height:17.2px" viewBox="0 0 17.7 17.2" preserveAspectRatio="none" fill="#333"><path d="M7.6 0.6c.7-.7 1.8-.7 2.5 0l7 7.6c.9 1 .4 2.7-1 2.7H1.6C.2 10.9-.3 9.2.6 8.2z"/><rect x="0" y="12.3" width="17.7" height="4.9" rx="1.3"/></svg><div class="b" style="left:566px;top:725.6px;width:1164px;height:1.5px;background:#ddd"></div><div class="t" style="left:578.00px;top:741.99px;font-size:19.5px;line-height:19.5px;color:#585858;font-weight:normal;transform:scaleX(0.935);transform-origin:0 0;"><i class="sl">/</i>dev<i class="sl">/</i>loop4</div><div class="t" style="left:759.00px;top:741.99px;font-size:19.5px;line-height:19.5px;color:#585858;font-weight:normal;transform:scaleX(0.935);transform-origin:0 0;">squashfs</div><div class="t" style="left:917.00px;top:741.99px;font-size:19.5px;line-height:19.5px;color:#585858;font-weight:normal;transform:scaleX(0.935);transform-origin:0 0;"><i class="sl">/</i>snap<i class="sl">/</i>core18<i class="sl">/</i>2128</div><div class="t" style="left:1214.00px;top:741.99px;font-size:19.5px;line-height:19.5px;color:#585858;font-weight:normal;transform:scaleX(0.935);transform-origin:0 0;">55.5 MB</div><div class="t" style="left:1387.00px;top:741.99px;font-size:19.5px;line-height:19.5px;color:#585858;font-weight:normal;transform:scaleX(0.935);transform-origin:0 0;">55.5 MB</div><div class="b" style="left:1548px;top:742.4px;width:94px;height:5.800000000000068px;background:#eee"></div><div class="b" style="left:1548px;top:742.4px;width:94px;height:5.800000000000068px;background:#2196f3"></div><div class="b" style="left:1665.4px;top:738.6px;width:53.59999999999991px;height:47.5px;background:#fff;border:1px solid #e9e9e9;box-sizing:border-box"></div><svg class="i" style="left:1683.0px;top:752.3px;width:17.7px;height:17.2px" viewBox="0 0 17.7 17.2" preserveAspectRatio="none" fill="#333"><path d="M7.6 0.6c.7-.7 1.8-.7 2.5 0l7 7.6c.9 1 .4 2.7-1 2.7H1.6C.2 10.9-.3 9.2.6 8.2z"/><rect x="0" y="12.3" width="17.7" height="4.9" rx="1.3"/></svg><div class="b" style="left:566px;top:797.4px;width:1164px;height:1.5px;background:#ddd"></div><div class="t" style="left:578.00px;top:813.99px;font-size:19.5px;line-height:19.5px;color:#585858;font-weight:normal;transform:scaleX(0.935);transform-origin:0 0;"><i class="sl">/</i>dev<i class="sl">/</i>loop2</div><div class="t" style="left:759.00px;top:813.99px;font-size:19.5px;line-height:19.5px;color:#585858;font-weight:normal;transform:scaleX(0.935);transform-origin:0 0;">squashfs</div><div class="t" style="left:917.00px;top:813.99px;font-size:19.5px;line-height:19.5px;color:#585858;font-weight:normal;transform:scaleX(0.935);transform-origin:0 0;"><i class="sl">/</i>snap<i class="sl">/</i>core20<i class="sl">/</i>1376</div><div class="t" style="left:1214.00px;top:813.99px;font-size:19.5px;line-height:19.5px;color:#585858;font-weight:normal;transform:scaleX(0.935);transform-origin:0 0;">62.0 MB</div><div class="t" style="left:1387.00px;top:813.99px;font-size:19.5px;line-height:19.5px;color:#585858;font-weight:normal;transform:scaleX(0.935);transform-origin:0 0;">62.0 MB</div><div class="b" style="left:1548px;top:814.2px;width:94px;height:5.7999999999999545px;background:#eee"></div><div class="b" style="left:1548px;top:814.2px;width:94px;height:5.7999999999999545px;background:#2196f3"></div><div class="b" style="left:1665.4px;top:810.4px;width:53.59999999999991px;height:47.5px;background:#fff;border:1px solid #e9e9e9;box-sizing:border-box"></div><svg class="i" style="left:1683.0px;top:824.1px;width:17.7px;height:17.2px" viewBox="0 0 17.7 17.2" preserveAspectRatio="none" fill="#333"><path d="M7.6 0.6c.7-.7 1.8-.7 2.5 0l7 7.6c.9 1 .4 2.7-1 2.7H1.6C.2 10.9-.3 9.2.6 8.2z"/><rect x="0" y="12.3" width="17.7" height="4.9" rx="1.3"/></svg><div class="b" style="left:566px;top:869.1px;width:1164px;height:1.5px;background:#ddd"></div><div class="t" style="left:578.00px;top:885.99px;font-size:19.5px;line-height:19.5px;color:#585858;font-weight:normal;transform:scaleX(0.935);transform-origin:0 0;"><i class="sl">/</i>dev<i class="sl">/</i>loop6</div><div class="t" style="left:759.00px;top:885.99px;font-size:19.5px;line-height:19.5px;color:#585858;font-weight:normal;transform:scaleX(0.935);transform-origin:0 0;">squashfs</div><div class="t" style="left:917.00px;top:885.99px;font-size:19.5px;line-height:19.5px;color:#585858;font-weight:normal;transform:scaleX(0.935);transform-origin:0 0;"><i class="sl">/</i>snap<i class="sl">/</i>lxd<i class="sl">/</i>22754</div><div class="t" style="left:1214.00px;top:885.99px;font-size:19.5px;line-height:19.5px;color:#585858;font-weight:normal;transform:scaleX(0.935);transform-origin:0 0;">78.9 MB</div><div class="t" style="left:1387.00px;top:885.99px;font-size:19.5px;line-height:19.5px;color:#585858;font-weight:normal;transform:scaleX(0.935);transform-origin:0 0;">78.9 MB</div><div class="b" style="left:1548px;top:885.9px;width:94px;height:5.800000000000068px;background:#eee"></div><div class="b" style="left:1548px;top:885.9px;width:94px;height:5.800000000000068px;background:#2196f3"></div><div class="b" style="left:1665.4px;top:882.1px;width:53.59999999999991px;height:47.5px;background:#fff;border:1px solid #e9e9e9;box-sizing:border-box"></div><svg class="i" style="left:1683.0px;top:895.8px;width:17.7px;height:17.2px" viewBox="0 0 17.7 17.2" preserveAspectRatio="none" fill="#333"><path d="M7.6 0.6c.7-.7 1.8-.7 2.5 0l7 7.6c.9 1 .4 2.7-1 2.7H1.6C.2 10.9-.3 9.2.6 8.2z"/><rect x="0" y="12.3" width="17.7" height="4.9" rx="1.3"/></svg><div class="b" style="left:566px;top:940.9px;width:1164px;height:1.5px;background:#ddd"></div><div class="t" style="left:578.00px;top:957.99px;font-size:19.5px;line-height:19.5px;color:#585858;font-weight:normal;transform:scaleX(0.935);transform-origin:0 0;"><i class="sl">/</i>dev<i class="sl">/</i>loop3</div><div class="t" style="left:759.00px;top:957.99px;font-size:19.5px;line-height:19.5px;color:#585858;font-weight:normal;transform:scaleX(0.935);transform-origin:0 0;">squashfs</div><div class="t" style="left:917.00px;top:957.99px;font-size:19.5px;line-height:19.5px;color:#585858;font-weight:normal;transform:scaleX(0.935);transform-origin:0 0;"><i class="sl">/</i>snap<i class="sl">/</i>snapd<i class="sl">/</i>15177</div><div class="t" style="left:1214.00px;top:957.99px;font-size:19.5px;line-height:19.5px;color:#585858;font-weight:normal;transform:scaleX(0.935);transform-origin:0 0;">43.8 MB</div><div class="t" style="left:1387.00px;top:957.99px;font-size:19.5px;line-height:19.5px;color:#585858;font-weight:normal;transform:scaleX(0.935);transform-origin:0 0;">43.8 MB</div><div class="b" style="left:1548px;top:957.7px;width:94px;height:5.7999999999999545px;background:#eee"></div><div class="b" style="left:1548px;top:957.7px;width:94px;height:5.7999999999999545px;background:#2196f3"></div><div class="b" style="left:1665.4px;top:953.9px;width:53.59999999999991px;height:47.5px;background:#fff;border:1px solid #e9e9e9;box-sizing:border-box"></div><svg class="i" style="left:1683.0px;top:967.6px;width:17.7px;height:17.2px" viewBox="0 0 17.7 17.2" preserveAspectRatio="none" fill="#333"><path d="M7.6 0.6c.7-.7 1.8-.7 2.5 0l7 7.6c.9 1 .4 2.7-1 2.7H1.6C.2 10.9-.3 9.2.6 8.2z"/><rect x="0" y="12.3" width="17.7" height="4.9" rx="1.3"/></svg><div class="b" style="left:566px;top:1012.7px;width:1164px;height:1.5px;background:#ddd"></div><div class="t" style="left:578.00px;top:1028.99px;font-size:19.5px;line-height:19.5px;color:#585858;font-weight:normal;transform:scaleX(0.935);transform-origin:0 0;"><i class="sl">/</i>dev<i class="sl">/</i>loop5</div><div class="t" style="left:759.00px;top:1028.99px;font-size:19.5px;line-height:19.5px;color:#585858;font-weight:normal;transform:scaleX(0.935);transform-origin:0 0;">squashfs</div><div class="t" style="left:917.00px;top:1028.99px;font-size:19.5px;line-height:19.5px;color:#585858;font-weight:normal;transform:scaleX(0.935);transform-origin:0 0;"><i class="sl">/</i>snap<i class="sl">/</i>lxd<i class="sl">/</i>21624</div><div class="t" style="left:1214.00px;top:1028.99px;font-size:19.5px;line-height:19.5px;color:#585858;font-weight:normal;transform:scaleX(0.935);transform-origin:0 0;">73.3 MB</div><div class="t" style="left:1387.00px;top:1028.99px;font-size:19.5px;line-height:19.5px;color:#585858;font-weight:normal;transform:scaleX(0.935);transform-origin:0 0;">73.3 MB</div><div class="b" style="left:1548px;top:1029.5px;width:94px;height:5.7999999999999545px;background:#eee"></div><div class="b" style="left:1548px;top:1029.5px;width:94px;height:5.7999999999999545px;background:#2196f3"></div><div class="b" style="left:1665.4px;top:1025.7px;width:53.59999999999991px;height:47.5px;background:#fff;border:1px solid #e9e9e9;box-sizing:border-box"></div><svg class="i" style="left:1683.0px;top:1039.4px;width:17.7px;height:17.2px" viewBox="0 0 17.7 17.2" preserveAspectRatio="none" fill="#333"><path d="M7.6 0.6c.7-.7 1.8-.7 2.5 0l7 7.6c.9 1 .4 2.7-1 2.7H1.6C.2 10.9-.3 9.2.6 8.2z"/><rect x="0" y="12.3" width="17.7" height="4.9" rx="1.3"/></svg><div class="b" style="left:566px;top:1084.4px;width:1164px;height:1.5px;background:#ddd"></div><div class="t" style="left:578.00px;top:1100.99px;font-size:19.5px;line-height:19.5px;color:#585858;font-weight:normal;transform:scaleX(0.935);transform-origin:0 0;">tmpfs</div><div class="t" style="left:759.00px;top:1100.99px;font-size:19.5px;line-height:19.5px;color:#585858;font-weight:normal;transform:scaleX(0.935);transform-origin:0 0;">tmpfs</div><div class="t" style="left:917.00px;top:1100.99px;font-size:19.5px;line-height:19.5px;color:#585858;font-weight:normal;transform:scaleX(0.935);transform-origin:0 0;"><i class="sl">/</i>run<i class="sl">/</i>user<i class="sl">/</i>0</div><div class="t" style="left:1214.00px;top:1100.99px;font-size:19.5px;line-height:19.5px;color:#585858;font-weight:normal;transform:scaleX(0.935);transform-origin:0 0;">0 bytes</div><div class="t" style="left:1387.00px;top:1100.99px;font-size:19.5px;line-height:19.5px;color:#585858;font-weight:normal;transform:scaleX(0.935);transform-origin:0 0;">393.6 MB</div><div class="b" style="left:1548px;top:1101.2px;width:94px;height:5.7999999999999545px;background:#eee"></div><div class="b" style="left:1665.4px;top:1097.4px;width:53.59999999999991px;height:47.5px;background:#fff;border:1px solid #e9e9e9;box-sizing:border-box"></div><svg class="i" style="left:1683.0px;top:1111.1px;width:17.7px;height:17.2px" viewBox="0 0 17.7 17.2" preserveAspectRatio="none" fill="#333"><path d="M7.6 0.6c.7-.7 1.8-.7 2.5 0l7 7.6c.9 1 .4 2.7-1 2.7H1.6C.2 10.9-.3 9.2.6 8.2z"/><rect x="0" y="12.3" width="17.7" height="4.9" rx="1.3"/></svg><div class="b" style="left:566px;top:1156.2px;width:1164px;height:1.5px;background:#ddd"></div><div class="t" style="left:578.00px;top:1172.99px;font-size:19.5px;line-height:19.5px;color:#585858;font-weight:normal;transform:scaleX(0.935);transform-origin:0 0;"><i class="sl">/</i>dev<i class="sl">/</i>loop7</div><div class="t" style="left:759.00px;top:1172.99px;font-size:19.5px;line-height:19.5px;color:#585858;font-weight:normal;transform:scaleX(0.935);transform-origin:0 0;">squashfs</div><div class="t" style="left:917.00px;top:1172.99px;font-size:19.5px;line-height:19.5px;color:#585858;font-weight:normal;transform:scaleX(0.935);transform-origin:0 0;"><i class="sl">/</i>snap<i class="sl">/</i>core20<i class="sl">/</i>1405</div><div class="t" style="left:1214.00px;top:1172.99px;font-size:19.5px;line-height:19.5px;color:#585858;font-weight:normal;transform:scaleX(0.935);transform-origin:0 0;">62.0 MB</div><div class="t" style="left:1387.00px;top:1172.99px;font-size:19.5px;line-height:19.5px;color:#585858;font-weight:normal;transform:scaleX(0.935);transform-origin:0 0;">62.0 MB</div><div class="b" style="left:1548px;top:1173.0px;width:94px;height:5.7999999999999545px;background:#eee"></div><div class="b" style="left:1548px;top:1173.0px;width:94px;height:5.7999999999999545px;background:#2196f3"></div><div class="b" style="left:1665.4px;top:1169.2px;width:53.59999999999991px;height:47.5px;background:#fff;border:1px solid #e9e9e9;box-sizing:border-box"></div><svg class="i" style="left:1683.0px;top:1182.9px;width:17.7px;height:17.2px" viewBox="0 0 17.7 17.2" preserveAspectRatio="none" fill="#333"><path d="M7.6 0.6c.7-.7 1.8-.7 2.5 0l7 7.6c.9 1 .4 2.7-1 2.7H1.6C.2 10.9-.3 9.2.6 8.2z"/><rect x="0" y="12.3" width="17.7" height="4.9" rx="1.3"/></svg></div>
</body></html>
